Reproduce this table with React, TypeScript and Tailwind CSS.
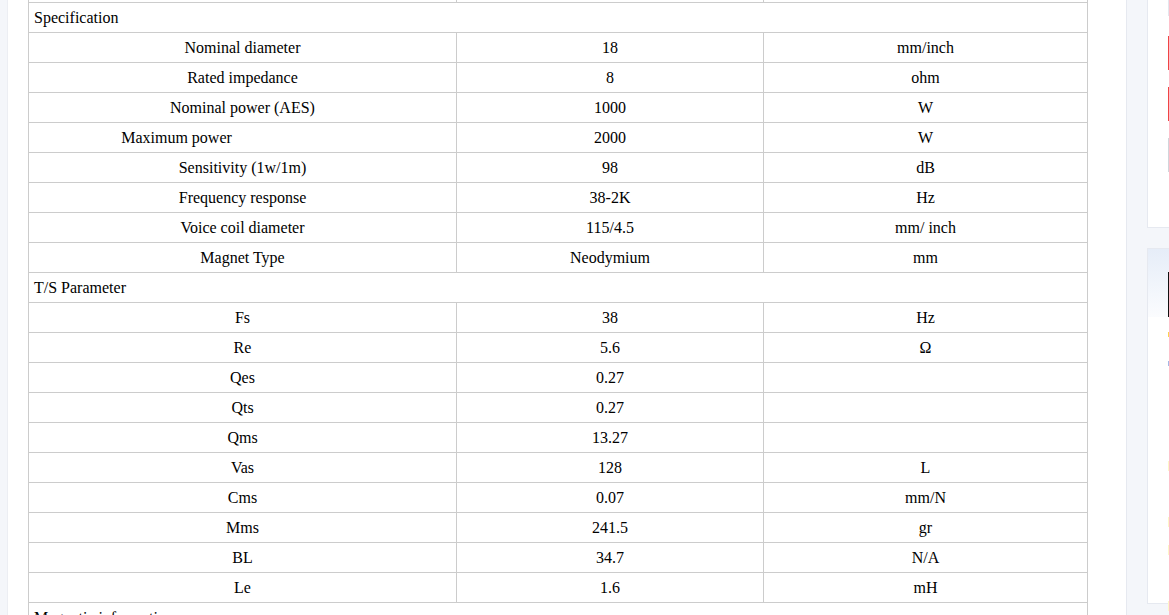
import React from "react";

type Row = { name: string; value: string; unit: string; shift?: boolean };

const spec: Row[] = [
  { name: "Nominal diameter", value: "18", unit: "mm/inch" },
  { name: "Rated impedance", value: "8", unit: "ohm" },
  { name: "Nominal power (AES)", value: "1000", unit: "W" },
  { name: "Maximum power", value: "2000", unit: "W", shift: true },
  { name: "Sensitivity (1w/1m)", value: "98", unit: "dB" },
  { name: "Frequency response", value: "38-2K", unit: "Hz" },
  { name: "Voice coil diameter", value: "115/4.5", unit: "mm/ inch" },
  { name: "Magnet Type", value: "Neodymium", unit: "mm" },
];

const ts: Row[] = [
  { name: "Fs", value: "38", unit: "Hz" },
  { name: "Re", value: "5.6", unit: "Ω" },
  { name: "Qes", value: "0.27", unit: "" },
  { name: "Qts", value: "0.27", unit: "" },
  { name: "Qms", value: "13.27", unit: "" },
  { name: "Vas", value: "128", unit: "L" },
  { name: "Cms", value: "0.07", unit: "mm/N" },
  { name: "Mms", value: "241.5", unit: "gr" },
  { name: "BL", value: "34.7", unit: "N/A" },
  { name: "Le", value: "1.6", unit: "mH" },
];

const cell = "border border-[#cccccc] h-[30px] p-0 text-center align-middle";

const SectionRow = ({ title }: { title: string }) => (
  <tr>
    <td colSpan={3} className="border border-[#cccccc] h-[30px] pl-[5px] py-0 text-left align-middle">
      {title}
    </td>
  </tr>
);

const DataRow = ({ row }: { row: Row }) => (
  <tr>
    <td className={cell + (row.shift ? " pr-[132px]" : "")}>{row.name}</td>
    <td className={cell}>{row.value}</td>
    <td className={cell}>{row.unit}</td>
  </tr>
);

const App = () => {
  return (
    <div className="flex h-[615px] w-[1169px] overflow-hidden bg-[#f4f6fa]">
      <div className="w-[8px] shrink-0 border-r border-[#eceef3]" />

      <main className="w-[1119px] shrink-0 bg-white border-r border-[#e6e9f0] pl-[20px]">
        <table
          className="-mt-[28px] w-[1059px] border-collapse text-[16px] leading-[18px] text-black table-fixed"
          style={{ fontFamily: '"Liberation Serif", "Times New Roman", serif' }}
        >
          <colgroup>
            <col className="w-[428px]" />
            <col className="w-[307px]" />
            <col className="w-[324px]" />
          </colgroup>
          <tbody>
            <tr>
              <td className={cell}></td>
              <td className={cell}></td>
              <td className={cell}></td>
            </tr>
            <SectionRow title="Specification" />
            {spec.map((r) => (
              <DataRow key={r.name} row={r} />
            ))}
            <SectionRow title="T/S Parameter" />
            {ts.map((r) => (
              <DataRow key={r.name} row={r} />
            ))}
            <SectionRow title="Magnetic information" />
          </tbody>
        </table>
      </main>

      {/* right sidebar, mostly cut off by the window */}
      <aside className="flex-1 flex flex-col gap-[20px] pl-[20px]">
        <div className="h-[229px] -mt-[1px] shrink-0 bg-white border border-[#e6e9f0] border-r-0 flex flex-col pl-[20px]">
          <div className="h-[16px] w-[2px] bg-[#e3e6ee]" />
          <div className="mt-[20px] h-[34px] w-[2px] bg-[#ef4444]" />
          <div className="mt-[17px] h-[34px] w-[2px] bg-[#ef4444]" />
          <div className="mt-[17px] h-[34px] w-[2px] bg-[#d1d5db]" />
        </div>
        <div className="h-[356px] shrink-0 bg-white border border-[#e6e9f0] border-r-0 flex flex-col">
          <div className="h-[91px] bg-gradient-to-b from-[#e6edf8] to-[#fbfcfe] pl-[20px] pt-[23px]">
            <div className="h-[45px] w-[2px] bg-[#111111]" />
          </div>
          <div className="flex-1 flex flex-col pl-[20px] pt-[15px]">
            <div className="h-[5px] w-[2px] bg-[#fcd34d]" />
            <div className="mt-[24px] h-[5px] w-[2px] bg-[#a5b8e6]" />
            <div className="mt-[95px] h-[10px] w-[2px] bg-[#fdf6c8]" />
            <div className="mt-[46px] h-[10px] w-[2px] bg-[#fdf6c8]" />
            <div className="mt-[18px] h-[10px] w-[2px] bg-[#fdf6c8]" />
            <div className="mt-[46px] h-[10px] w-[2px] bg-[#fdf6c8]" />
          </div>
        </div>
      </aside>
    </div>
  );
};

export default App;
